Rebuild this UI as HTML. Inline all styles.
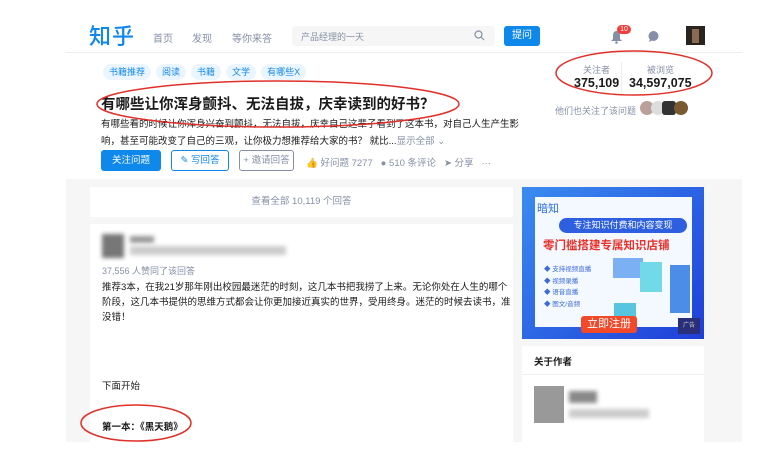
<!DOCTYPE html>
<html><head><meta charset="utf-8"><style>
*{margin:0;padding:0;box-sizing:border-box}
body{width:763px;height:475px;background:#fff;font-family:"Liberation Sans","Noto Sans CJK SC",sans-serif;position:relative;overflow:hidden;color:#1a1a1a}
.a{position:absolute;white-space:nowrap}
.blur{background:#bbb;filter:blur(2px);position:absolute}
</style></head><body>
<div class="a" style="left:66px;top:52px;width:676px;height:1px;background:#eee"></div>
<div class="a" style="left:89px;top:19px;font-size:22px;color:#0f88eb;font-weight:500;letter-spacing:1px">知乎</div>
<div class="a" style="left:153px;top:30px;font-size:10px;color:#8590a6">首页</div>
<div class="a" style="left:192px;top:30px;font-size:10px;color:#8590a6">发现</div>
<div class="a" style="left:232px;top:30px;font-size:10px;color:#8590a6">等你来答</div>
<div class="a" style="left:292px;top:26px;width:203px;height:20px;background:#f6f6f6;border-radius:3px"></div>
<div class="a" style="left:301px;top:30px;font-size:9px;color:#8590a6">产品经理的一天</div>
<svg class="a" style="left:474px;top:30px" width="11" height="11"><circle cx="4.5" cy="4.5" r="3.5" stroke="#8590a6" fill="none" stroke-width="1.2"/><line x1="7" y1="7" x2="10" y2="10" stroke="#8590a6" stroke-width="1.2"/></svg>
<div class="a" style="left:504px;top:26px;width:36px;height:20px;background:#0f88eb;border-radius:3px;color:#fff;font-size:10px;text-align:center;line-height:20px">提问</div>
<svg class="a" style="left:610px;top:30px" width="13" height="14"><path d="M6.5 1C3.5 1 3 4 3 6v3l-2 2h11l-2-2V6c0-2-.5-5-3.5-5z" fill="#8590a6"/><circle cx="6.5" cy="12.5" r="1.3" fill="#8590a6"/></svg>
<div class="a" style="left:617px;top:25px;width:14px;height:9px;background:#f1403c;border-radius:5px;color:#fff;font-size:7px;text-align:center;line-height:9px">10</div>
<svg class="a" style="left:647px;top:30px" width="13" height="13"><circle cx="6.5" cy="6" r="5" fill="#8590a6"/><path d="M3 9 L2 12 L6 10z" fill="#8590a6"/></svg>
<div class="a" style="left:686px;top:26px;width:19px;height:19px;background:#2a2420"></div>
<div class="a" style="left:692px;top:29px;width:7px;height:14px;background:#8a6a55"></div>
<div class="a" style="left:103px;top:65px;font-size:9px;color:#0f88eb">
<span style="background:#ebf5ff;border-radius:9px;padding:3px 6px;margin-right:5px">书籍推荐</span><span style="background:#ebf5ff;border-radius:9px;padding:3px 6px;margin-right:5px">阅读</span><span style="background:#ebf5ff;border-radius:9px;padding:3px 6px;margin-right:5px">书籍</span><span style="background:#ebf5ff;border-radius:9px;padding:3px 6px;margin-right:5px">文学</span><span style="background:#ebf5ff;border-radius:9px;padding:3px 6px">有哪些X</span></div>
<div class="a" style="left:101px;top:93px;font-size:14.5px;font-weight:bold">有哪些让你浑身颤抖、无法自拔，庆幸读到的好书？</div>
<div class="a" style="left:101px;top:116px;font-size:9.5px;color:#1a1a1a;line-height:17px">有哪些看的时候让你浑身兴奋到颤抖，无法自拔，庆幸自己这辈子看到了这本书，对自己人生产生影<br>响，甚至可能改变了自己的三观，让你极力想推荐给大家的书？ 就比...<span style="color:#8590a6">显示全部 ⌄</span></div>
<div class="a" style="left:101px;top:150px;width:60px;height:21px;background:#0f88eb;border-radius:3px;color:#fff;font-size:9.5px;text-align:center;line-height:21px">关注问题</div>
<div class="a" style="left:171px;top:150px;width:58px;height:21px;border:1px solid #0f88eb;border-radius:3px;color:#0f88eb;font-size:9.5px;text-align:center;line-height:19px">✎ 写回答</div>
<div class="a" style="left:239px;top:150px;width:55px;height:21px;border:1px solid #8590a6;border-radius:3px;color:#8590a6;font-size:9.5px;text-align:center;line-height:19px">+ 邀请回答</div>
<div class="a" style="left:306px;top:155px;font-size:9.5px;color:#8590a6">👍 好问题 7277 &nbsp; ● 510 条评论 &nbsp; ➤ 分享 &nbsp; ···</div>
<div class="a" style="left:583px;top:63px;font-size:9px;color:#8590a6">关注者</div>
<div class="a" style="left:647px;top:63px;font-size:9px;color:#8590a6">被浏览</div>
<div class="a" style="left:621px;top:62px;width:1px;height:30px;background:#eee"></div>
<div class="a" style="left:574px;top:76px;font-size:12.5px;font-weight:bold">375,109</div>
<div class="a" style="left:629px;top:76px;font-size:12.5px;font-weight:bold">34,597,075</div>
<div class="a" style="left:555px;top:104px;font-size:9px;color:#8590a6">他们也关注了该问题</div>
<div class="a" style="left:640px;top:101px;width:14px;height:14px;border-radius:50%;background:#b9a09a"></div>
<div class="a" style="left:651px;top:101px;width:14px;height:14px;border-radius:50%;background:#ddd"></div>
<div class="a" style="left:662px;top:101px;width:14px;height:14px;border-radius:3px;background:#333"></div>
<div class="a" style="left:674px;top:101px;width:14px;height:14px;border-radius:50%;background:#7a5a30"></div>
<div class="a" style="left:66px;top:179px;width:676px;height:263px;background:#f6f6f6"></div>
<div class="a" style="left:90px;top:187px;width:423px;height:30px;background:#fff;font-size:9.5px;color:#8590a6;text-align:center;line-height:30px">查看全部 10,119 个回答</div>
<div class="a" style="left:90px;top:224px;width:423px;height:218px;background:#fff"></div>
<div class="blur" style="left:102px;top:234px;width:22px;height:24px;background:#777"></div>
<div class="blur" style="left:130px;top:236px;width:24px;height:7px;background:#999"></div>
<div class="blur" style="left:130px;top:246px;width:156px;height:9px;background:#ccc"></div>
<div class="a" style="left:102px;top:264px;font-size:9px;color:#8590a6">37,556 人赞同了该回答</div>
<div class="a" style="left:102px;top:280px;font-size:9.5px;line-height:15px">推荐3本，在我21岁那年刚出校园最迷茫的时刻，这几本书把我捞了上来。无论你处在人生的哪个<br>阶段，这几本书提供的思维方式都会让你更加接近真实的世界，受用终身。迷茫的时候去读书，准<br>没错！</div>
<div class="a" style="left:102px;top:378px;font-size:9.5px">下面开始</div>
<div class="a" style="left:102px;top:419px;font-size:9.5px;font-weight:bold">第一本：《黑天鹅》</div>
<div class="a" style="left:522px;top:187px;width:182px;height:152px;background:linear-gradient(135deg,#3a8cf0,#1f3ed8)"></div>
<div class="a" style="left:535px;top:197px;width:157px;height:130px;background:#f4f9ff"></div>
<div class="a" style="left:537px;top:200px;font-size:11px;color:#2d6fe0">暗知</div>
<div class="a" style="left:559px;top:218px;width:128px;height:15px;background:#2d5fe0;border-radius:8px;color:#fff;font-size:9px;text-align:center;line-height:15px">专注知识付费和内容变现</div>
<div class="a" style="left:543px;top:237px;font-size:11.5px;font-weight:bold;color:#e8302a">零门槛搭建专属知识店铺</div>
<div class="a" style="left:544px;top:264px;font-size:6.5px;color:#3c6ad8;line-height:11.5px">◆ 支持视频直播<br>◆ 视频录播<br>◆ 语音直播<br>◆ 图文/音频</div>
<div class="a" style="left:613px;top:258px;width:30px;height:20px;background:#7bb0f5"></div>
<div class="a" style="left:640px;top:262px;width:22px;height:30px;background:#72d9e8"></div>
<div class="a" style="left:670px;top:265px;width:20px;height:48px;background:#4c8de8"></div>
<div class="a" style="left:614px;top:303px;width:22px;height:20px;background:#58c5e0"></div>
<div class="a" style="left:581px;top:316px;width:56px;height:17px;background:#f04a2a;border-radius:3px;color:#fff;font-size:11px;text-align:center;line-height:17px">立即注册</div>
<div class="a" style="left:678px;top:318px;width:22px;height:16px;background:#2a2f7a;color:#ccc;font-size:6px;text-align:center;line-height:16px">广告</div>
<div class="a" style="left:522px;top:346px;width:182px;height:96px;background:#fff"></div>
<div class="a" style="left:534px;top:354px;font-size:9.5px;font-weight:bold">关于作者</div>
<div class="a" style="left:522px;top:374px;width:182px;height:1px;background:#f0f0f0"></div>
<div class="a" style="left:534px;top:386px;width:30px;height:37px;background:#999"></div>
<div class="blur" style="left:569px;top:391px;width:28px;height:12px;background:#888"></div>
<div class="blur" style="left:569px;top:409px;width:80px;height:9px;background:#ccc"></div>
<svg class="a" style="left:0;top:0" width="763" height="475">
<ellipse cx="278" cy="104" rx="181" ry="23" fill="none" stroke="#e0302a" stroke-width="1.5"/>
<ellipse cx="634" cy="73" rx="78" ry="22" fill="none" stroke="#e0302a" stroke-width="1.5"/>
<ellipse cx="136" cy="423" rx="55" ry="18" fill="none" stroke="#e0302a" stroke-width="1.5"/>
</svg>
</body></html>
